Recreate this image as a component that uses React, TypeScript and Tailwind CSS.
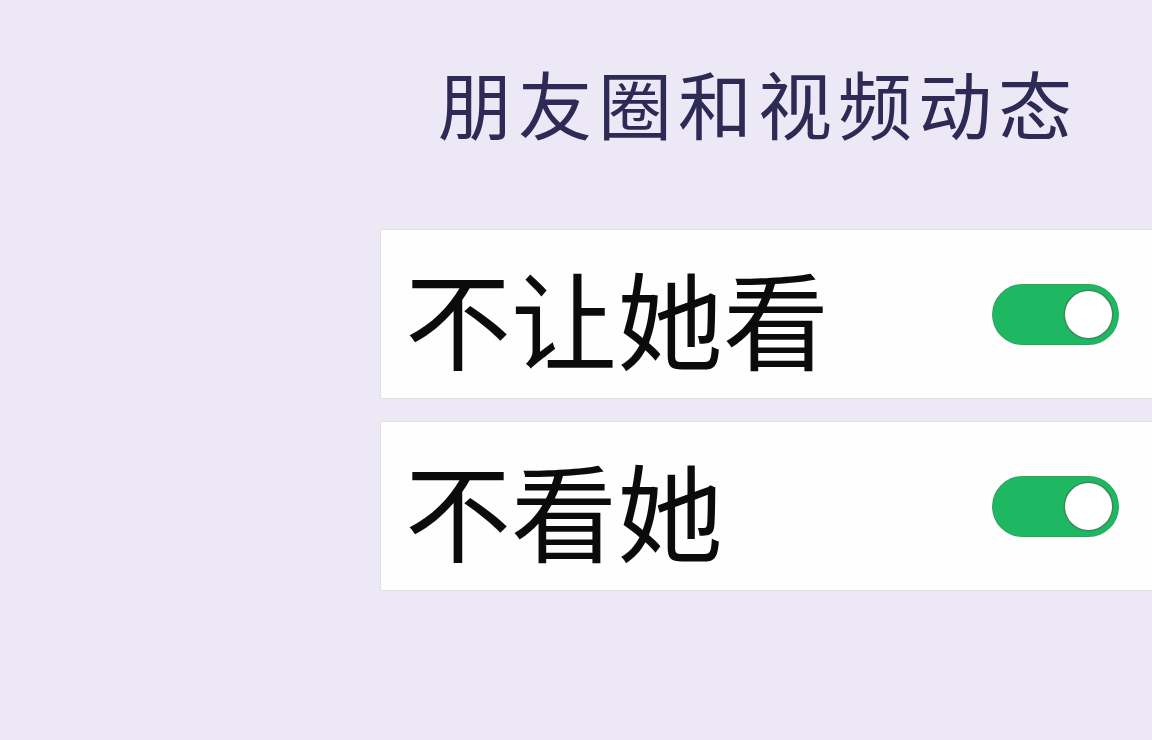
import React from "react";

const cjk = { fontFamily: '"Noto Sans CJK SC", "Noto Sans", sans-serif' };

function Toggle() {
  return (
    <div className="flex h-[59px] w-[125px] items-center justify-end rounded-full bg-[#1eb862] pr-[6px] shadow-[0_0_0_1px_#2aa65f]">
      <div className="h-[47px] w-[47px] rounded-full bg-white shadow-[0_0_0_1.5px_#3a8a5c]" />
    </div>
  );
}

function Row({ label }: { label: string }) {
  return (
    <div className="flex h-[170px] items-center justify-between border border-[#e2dfe8] border-r-0 bg-[#fefefe] pl-[24px] pr-[34px]">
      <span className="pt-[4px] text-[106px] leading-none text-[#0b0b0b]" style={cjk}>
        {label}
      </span>
      <Toggle />
    </div>
  );
}

export default function App() {
  return (
    <div className="h-[740px] w-[1152px] overflow-hidden bg-[#ece8f5]" style={cjk}>
      <div className="flex flex-col pl-[380px]">
        <h1 className="pl-[58px] pt-[65px] text-[74px] font-normal leading-none tracking-[6px] text-[#2d2a55]">
          朋友圈和视频动态
        </h1>
        <div className="mt-[90px] flex flex-col gap-[22px]">
          <Row label="不让她看" />
          <Row label="不看她" />
        </div>
      </div>
    </div>
  );
}
